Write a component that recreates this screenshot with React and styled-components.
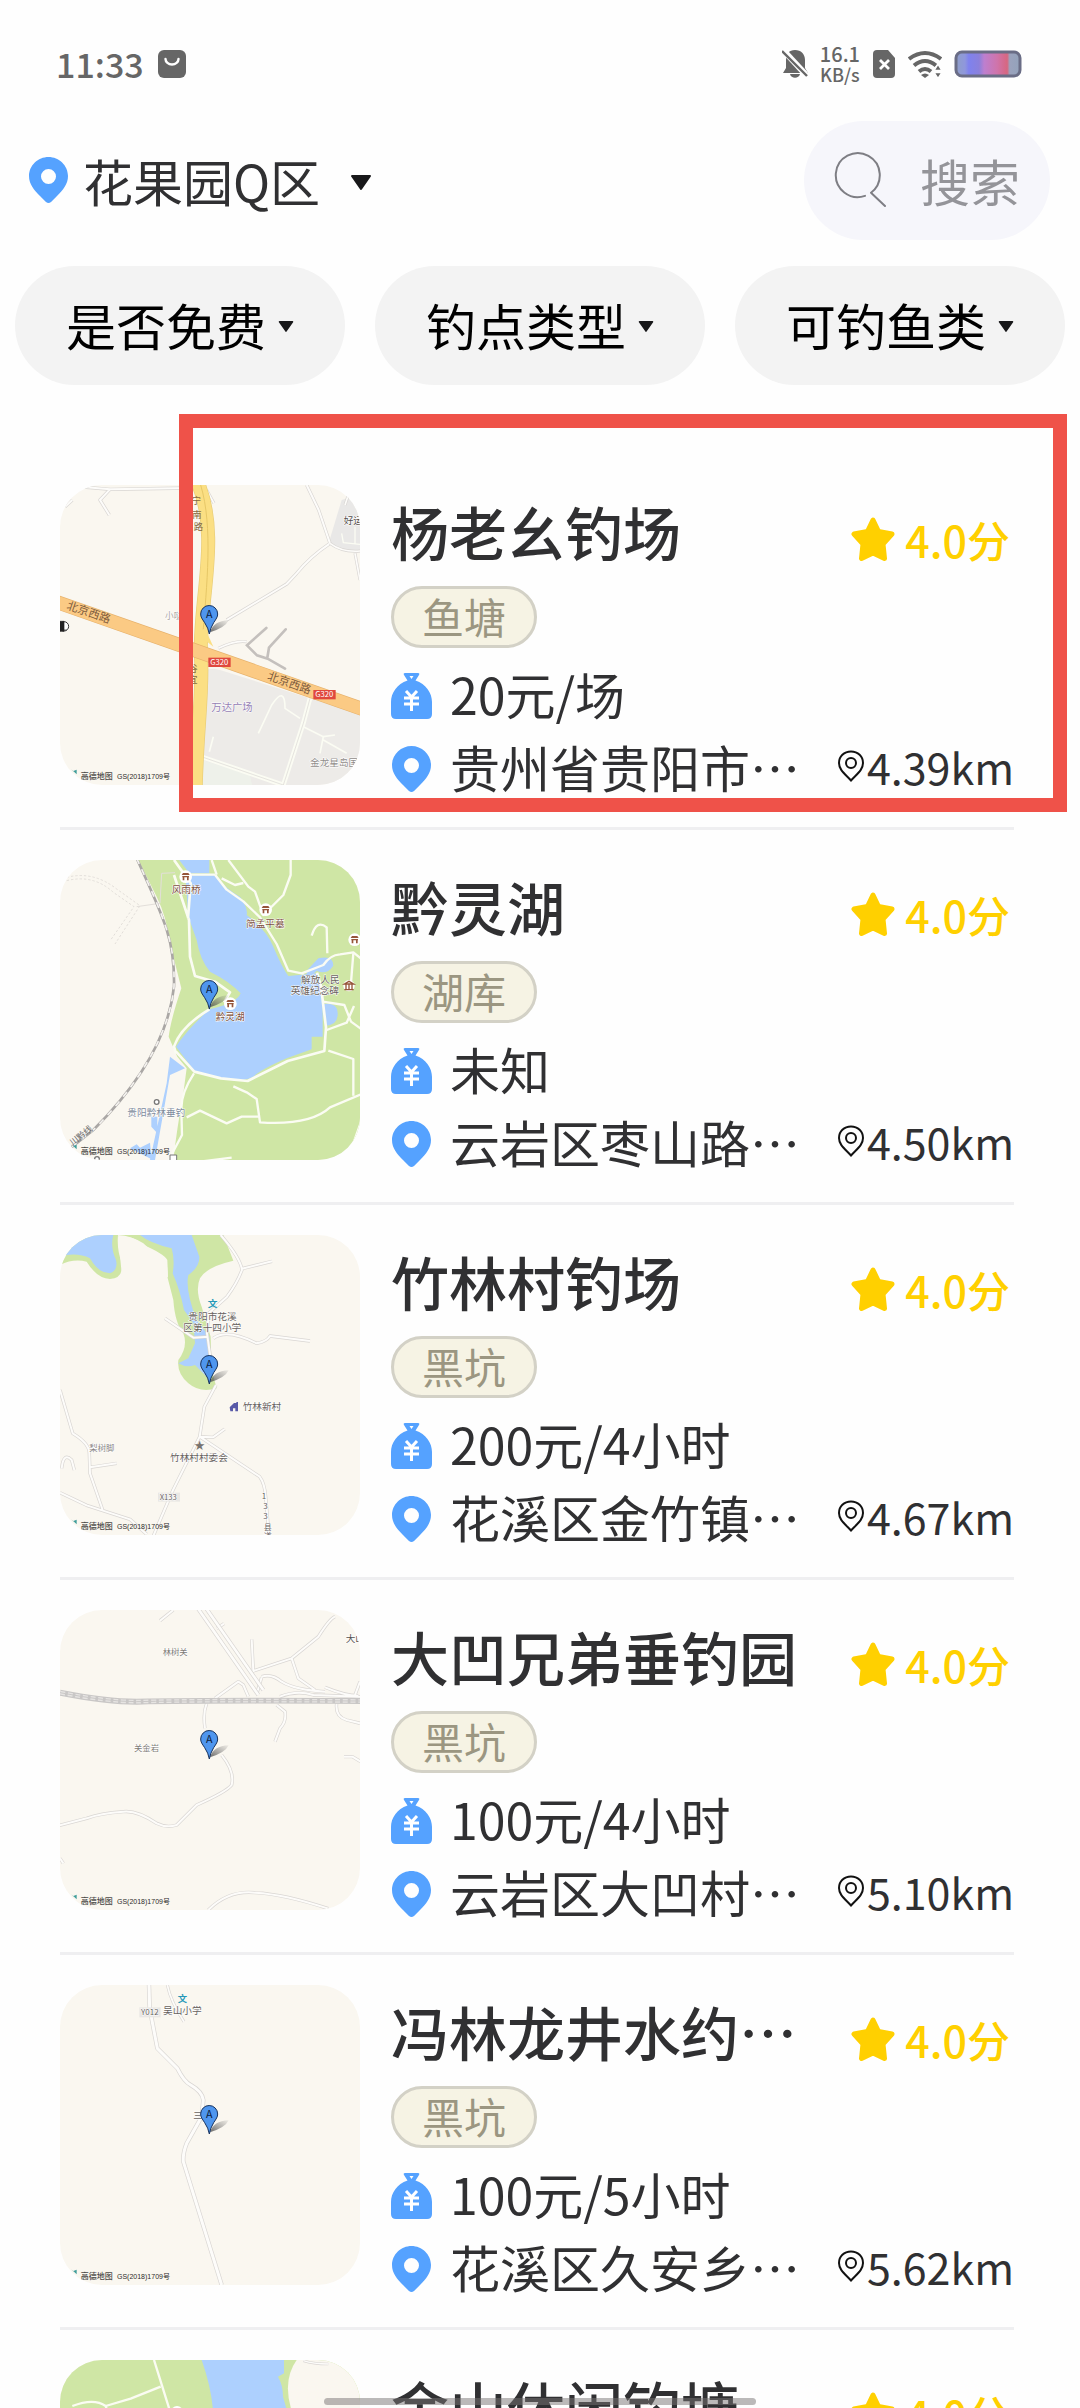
import React from "react";
import styled, { createGlobalStyle } from "styled-components";

const GlobalStyle = createGlobalStyle`
  * {
    box-sizing: border-box;
  }

  body {
    margin: 0;
    background-color: #fefefe;
    color: #303032;
    font-family: "Noto Sans CJK SC", "Noto Sans", sans-serif;
  }

  button,
  input {
    font-family: inherit;
  }
`;

const spots = [
  {
    name: "杨老幺钓场",
    type: "鱼塘",
    price: "20元/场",
    address: "贵州省贵阳市…",
    distance: "4.39km",
    score: "4.0分",
    map: "plaza",
    marked: true,
  },
  {
    name: "黔灵湖",
    type: "湖库",
    price: "未知",
    address: "云岩区枣山路…",
    distance: "4.50km",
    score: "4.0分",
    map: "lake",
  },
  {
    name: "竹林村钓场",
    type: "黑坑",
    price: "200元/4小时",
    address: "花溪区金竹镇…",
    distance: "4.67km",
    score: "4.0分",
    map: "bamboo",
  },
  {
    name: "大凹兄弟垂钓园",
    type: "黑坑",
    price: "100元/4小时",
    address: "云岩区大凹村…",
    distance: "5.10km",
    score: "4.0分",
    map: "railway",
  },
  {
    name: "冯林龙井水约…",
    type: "黑坑",
    price: "100元/5小时",
    address: "花溪区久安乡…",
    distance: "5.62km",
    score: "4.0分",
    map: "village",
  },
  {
    name: "金山休闲钓塘",
    type: "鱼塘",
    price: "未知",
    address: "花溪区",
    distance: "5.80km",
    score: "4.0分",
    map: "park",
  },
];

const filters = ["是否免费", "钓点类型", "可钓鱼类"];

const App = () => {
  return (
    <Screen>
      <GlobalStyle />
      <StatusBar />
      <Header>
        <LocationButton type="button">
          <PinIcon />
          花果园Q区
          <Caret viewBox="0 0 22 16" $width={22}>
            <path d="M2 1h18l-9 13z" />
          </Caret>
        </LocationButton>
        <SearchBox>
          <SearchIcon />
          <SearchInput type="text" placeholder="搜索" aria-label="搜索" />
        </SearchBox>
      </Header>
      <Filters>
        {filters.map((label) => (
          <FilterButton type="button" key={label}>
            {label}
            <Caret viewBox="0 0 22 16" $width={16}>
              <path d="M2 1h18l-9 13z" />
            </Caret>
          </FilterButton>
        ))}
      </Filters>
      <SpotList>
        {spots.map((spot) => (
          <Spot key={spot.name} spot={spot} />
        ))}
      </SpotList>
      <HomeIndicator />
    </Screen>
  );
};

export default App;

const StatusBar = () => (
  <StyledStatusBar>
    <StatusGroup $gap={14}>
      <Time>11:33</Time>
      <svg width="28" height="28" viewBox="0 0 28 28">
        <rect width="28" height="28" rx="6" fill="#666" />
        <path
          d="M7.5 9a6.5 5.5 0 0 0 13 0"
          fill="none"
          stroke="#fff"
          strokeWidth="2.4"
          strokeLinecap="round"
        />
      </svg>
    </StatusGroup>
    <StatusGroup $gap={12}>
      <svg width="26" height="30" viewBox="0 0 26 30">
        <path
          d="M13 1c6 0 10 4 10 10v8l3 5H1l3-5v-8c0-6 3-10 9-10zM8 25h10c-1 5-9 5-10 0z"
          fill="#666"
        />
        <path d="M1 1l25 27" stroke="#fefefe" strokeWidth="6" />
        <path d="M0 2l25 25" stroke="#666" strokeWidth="2.4" />
      </svg>
      <Speed>
        <strong>16.1</strong>
        <span>KB/s</span>
      </Speed>
      <svg width="24" height="28" viewBox="0 0 24 28">
        <path
          d="M5 0h11l7 8v16a4 4 0 0 1-4 4H5a4 4 0 0 1-4-4V4a4 4 0 0 1 4-4z"
          fill="#666"
        />
        <path d="M8 10l9 9M17 10l-9 9" stroke="#fff" strokeWidth="2.8" />
      </svg>
      <svg width="34" height="28" viewBox="0 0 34 28">
        <g fill="none" stroke="#666" strokeWidth="4">
          <path d="M1 9q16-12 32 0" />
          <path d="M6 15.500q11-9 22 0" />
          <path d="M11 21.500q6-5 12 0" />
        </g>
        <path d="M13 25q4-3 8 0l-4 3z" fill="#666" />
        <path
          d="M26 20.500l4-6.500 4 6.500zM26 22.500h8l-4 6z"
          fill="#666"
          stroke="#fefefe"
          strokeWidth="1.500"
        />
      </svg>
      <svg width="68" height="28" viewBox="0 0 68 28">
        <defs>
          <linearGradient id="charge">
            <stop offset="0" stopColor="#8f9fc9" />
            <stop offset="0.14" stopColor="#8f97dc" />
            <stop offset="0.2" stopColor="#7f82ee" />
            <stop offset="0.36" stopColor="#8a80dc" />
            <stop offset="0.44" stopColor="#bd7fcf" />
            <stop offset="0.64" stopColor="#cf74ab" />
            <stop offset="0.8" stopColor="#d76680" />
            <stop offset="0.84" stopColor="#9ba3bd" />
            <stop offset="1" stopColor="#93a2bb" />
          </linearGradient>
        </defs>
        <rect
          x="2"
          y="2"
          width="64"
          height="24"
          rx="6"
          fill="url(#charge)"
          stroke="#6a6d86"
          strokeWidth="3"
        />
      </svg>
    </StatusGroup>
  </StyledStatusBar>
);

const Spot = ({ spot }) => (
  <SpotItem>
    <MapPicture name={spot.map} />
    <Info>
      <TitleRow>
        <Title>{spot.name}</Title>
        <Rating>
          <StarIcon />
          {spot.score}
        </Rating>
      </TitleRow>
      <Tag>{spot.type}</Tag>
      <InfoRow>
        <MoneyIcon />
        <InfoText>{spot.price}</InfoText>
      </InfoRow>
      <InfoRow>
        <PinIcon />
        <InfoText>{spot.address}</InfoText>
        <Distance>
          <OutlinePinIcon />
          {spot.distance}
        </Distance>
      </InfoRow>
    </Info>
    {spot.marked && <Highlight />}
  </SpotItem>
);

/* ---------- icons ---------- */

const PinIcon = () => (
  <svg width="41" height="46" viewBox="0 0 41 46" fill="#55a2ff">
    <path
      fillRule="evenodd"
      d="M20.500 0C31 0 40 8.500 40 19c0 8-5 14-11 20l-6 6q-2.500 2-5 0l-6-6C6 33 1 27 1 19 1 8.500 10 0 20.500 0zm0 12a7.500 7.500 0 1 0 0 15 7.500 7.500 0 0 0 0-15z"
    />
  </svg>
);

const MoneyIcon = () => (
  <svg width="41" height="46" viewBox="0 0 41 46">
    <path
      d="M14 0h13q2 0 1 2l-3.500 5.500C35 11 41 20 41 29v12q0 5-5 5H5q-5 0-5-5V29C0 20 6 11 16.500 7.500L13 2q-1-2 1-2z"
      fill="#55a2ff"
    />
    <path d="M18.500 3h4l-2 3z" fill="#fff" />
    <path
      d="M15 18l5.500 6 5.500-6M13 25h15M13 31h15M20.500 24v14"
      fill="none"
      stroke="#fff"
      strokeWidth="3"
    />
  </svg>
);

const OutlinePinIcon = () => (
  <svg width="28" height="32" viewBox="0 0 28 32" fill="none" stroke="#111" strokeWidth="2">
    <path d="M14 1.500c7 0 12 5 12 11.500 0 7-6 11-12 17.500C8 24 2 20 2 13 2 6.500 7 1.500 14 1.500z" />
    <circle cx="14" cy="13" r="5" />
  </svg>
);

const StarIcon = () => (
  <svg width="44" height="45" viewBox="0 0 44 45">
    <path
      d="M22 3l5.500 11.500L41 17l-9 10 1.500 14.500L22 36l-11.500 5.500L12 27 3 17l13.500-2.500z"
      fill="#ffd000"
      stroke="#ffd000"
      strokeWidth="5"
      strokeLinejoin="round"
    />
  </svg>
);

const SearchIcon = () => (
  <svg width="54" height="58" viewBox="0 0 54 58" fill="none" stroke="#7e7e84" strokeWidth="2">
    <path
      d="M31 44.900A22 22 0 1 1 37 41.700L51 55"
      strokeLinecap="round"
      strokeLinejoin="round"
    />
  </svg>
);

/* ---------- map thumbnails ---------- */

const LAND = "#faf7f0";
const GREEN = "#cfe6a5";
const WATER = "#add0fe";

// a road is a grey line with a lighter one on top
const Road = ({ d, width = 10, edge = "#d9d6d3", fill = "#fdfcfa" }) => (
  <g fill="none" strokeLinejoin="round">
    <path d={d} stroke={edge} strokeWidth={width} />
    <path d={d} stroke={fill} strokeWidth={width - 4} />
  </g>
);

const Path = ({ d, width = 8 }) => (
  <path d={d} fill="none" stroke="#fbfcf3" strokeWidth={width} strokeLinejoin="round" />
);

const Shrine = ({ x, y }) => (
  <g transform={`translate(${x} ${y})`}>
    <circle r="19" fill="#fff" />
    <path
      d="M-12 -5l4-6h16l4 6zM-10 -2h20v4h-20zM-9 2h5v9h-5zM4 2h5v9h-5z"
      fill="#96553a"
    />
  </g>
);

const Shield = ({ x, y, children }) => (
  <g>
    <rect x={x} y={y} width="67" height="28" fill="#e0483e" />
    <text x={x + 33} y={y + 22} fontSize="23" textAnchor="middle" fill="#fff">
      {children}
    </text>
  </g>
);

const Label = styled.text`
  font-size: ${(props) => props.$size || 29}px;
  fill: ${(props) => props.$color || "#67625e"};
  paint-order: stroke;
  stroke: #ffffff;
  stroke-width: 3px;
`;

const maps = {
  plaza: {
    top: 255,
    land: (
      <>
        <Road d="M60 255L210 268L450 264M210 268L180 300L208 345M75 320l22-20" />
        <path d="M480 820q25-20 60-10l430 135v220H465z" fill="#edebe8" />
        <path d="M470 1075l160 50 8 40H462z" fill="#eef1ea" />
        <path d="M905 300l60-20v170h-60l-38-24z" fill="#e9e8e7" />
        <Path d="M905 400l5 28 50 5M945 380v50" width={4} />
        <Road d="M800 255l36 75 34 100q-60 40-100 90l-30 32L560 660" />
        <Road d="M870 430q40 30 100 22M945 460l15 80M935 255l-20 60M500 270l22 40" width={9} />
        <Road d="M535 745q50-25 85-20" width={9} />
        <g fill="none" stroke="#c4c0bd" strokeWidth="8" strokeLinecap="round">
          <path d="M679 684l-58 52 30 30 32 10 52 30M737 688l-50 55-5 30" />
        </g>
        <Path d="M455 1060l275 95M810 895l-20 75-60 185" width={14} />
        <path d="M455 1060l275 95M810 895l-20 75-60 185" stroke="#d9d6d3" fill="none" strokeWidth="2" />
        <Path d="M655 1000l40-85q40-60 40 10l45 30M520 1010l-12 45M790 980l60 30 35-5M850 1010l-10 50M850 1020l70 40" width={5} />
        <Road
          d="M470 240C520 350 505 480 492 600Q480 720 483 770C490 870 470 1000 467 1170"
          width={42}
          edge="#e8cd78"
          fill="#fbdf83"
        />
        <path d="M482 255C520 380 500 560 488 710" fill="none" stroke="#e6c767" strokeWidth="3" />
        <path d="M470 700l25-15 25 55z" fill="#fbdf83" />
        <Road d="M50 606L970 928" width={42} edge="#e6b16b" fill="#fbca84" />
        <g fontSize="34" fill="#7d5a3c">
          <text transform="translate(78 626) rotate(19)">北京西路</text>
          <text transform="translate(680 838) rotate(19)">北京西路</text>
        </g>
        <g fontSize="28" fill="#86693e">
          <text x="455" y="312">宁</text>
          <text x="457" y="353">南</text>
          <text x="461" y="390">路</text>
          <text x="445" y="817">谷</text>
          <text x="445" y="850">宜</text>
        </g>
        <Shield x={505} y={773}>G320</Shield>
        <Shield x={820} y={870}>G320</Shield>
        <Label x="375" y="658" $size={26} $color="#aaa6a2">小哒</Label>
        <Label x="514" y="932" $size={31} $color="#9480b3">万达广场</Label>
        <Label x="810" y="1098" $color="#918d8a">金龙星岛国</Label>
        <Label x="911" y="371" $color="#55504e">好运</Label>
        <circle cx="72" cy="679" r="14" fill="#fff" stroke="#333" strokeWidth="3" />
        <path d="M60 664h12v30H60zM72 690h8" fill="#222" stroke="#222" strokeWidth="2" />
      </>
    ),
  },
  lake: {
    top: 60,
    land: (
      <>
        <path
          d="M295 60L350 170Q380 230 390 310L424 445Q392 540 386 590L412 650L440 685L430 760Q410 870 400 960H970V50z"
          fill={GREEN}
        />
        <path d="M410 50h98v50h-60z" fill={WATER} />
        <path
          d="M436 106H525Q560 150 600 170Q625 205 620 225Q680 270 700 320Q725 380 745 408L830 400L848 470V590H815V628L740 655Q660 690 640 710Q600 730 540 715L465 695L408 620Q440 570 508 508Q590 490 602 460Q570 425 510 395Q480 360 470 300L445 230z"
          fill={WATER}
        />
        <path
          d="M835 355q45-10 45 22-20 30-50 15l-30 30v-30zM850 492q45-5 43 30 0 35-38 35zM390 650l45 35-45 20-45 255h-15l50-230zM334 830h18v50l-18-20z"
          fill={WATER}
        />
        <path d="M270 925l20-12 10 10 30-15 5 50-30-15z" fill={WATER} />
        <Path d="M402 60l50 70 -8 105M402 105l45 135 3 110 15 58 60 17 45 32-18 30M408 640l-6-20q20-60 106-112M408 635l55 60 80 20 80 8 120-60 110-30 5-70-15-125-12-40" />
        <Path d="M525 104l35 45 50 35 50 48 50 80 35 80 40 8 65-25q20-30 50-32l40-6 25 20M450 104h75M515 60l15 44M565 60l60 80 20 15 25 70 60-60 22-60V60M545 115l40 20 25-6" width={7} />
        <Path d="M815 287q15-50 45-25l2 78M848 485l65 10 20 50 35 25M860 570l60-22 22-50M940 340l-8 100M865 632l75 25v110M965 762l-95 40q-60 55-210 45l-10-70-30-20-40-18M655 830l-50 0-45 20-80-38-40 20M462 700q-40 60-38 110l2 75-40 75M965 840l-25 70M480 965l95-12" width={7} />
        <g fill="none" stroke="#e2ded9" strokeWidth="3" strokeDasharray="7 6">
          <path d="M80 112q80-20 150 35l70 50-75 115M80 122q80-20 140 35l62 43-70 100" />
          <path d="M290 200l70-10 5-90 40-2" strokeDasharray="none" />
        </g>
        <g fill="none">
          <path d="M290 55C380 250 405 310 402 440C385 600 280 750 160 870L90 925" stroke="#aaa7a5" strokeWidth="8" />
          <path
            d="M290 55C380 250 405 310 402 440C385 600 280 750 160 870L90 925"
            stroke="#f4f2ef"
            strokeWidth="5"
            strokeDasharray="18 18"
          />
        </g>
        <Shrine x={437} y={110} />
        <Shrine x={677} y={209} />
        <Shrine x={944} y={299} />
        <Shrine x={571} y={491} />
        <g transform="translate(927 437)" fill="none" stroke="#96553a" strokeWidth="4">
          <circle r="17" fill="#fff" stroke="none" />
          <path d="M-14 -5l14-8 14 8zM-9 -3v13M0 -3v13M9 -3v13M-14 12h28" />
        </g>
        <Label x="395" y="160" $color="#7b4f3c">风雨桥</Label>
        <Label x="618" y="260" $color="#7b4f3c">简孟平墓</Label>
        <Label x="527" y="541" $color="#7b4f3c">黔灵湖</Label>
        <Label x="783" y="430">解放人民</Label>
        <Label x="752" y="462">英雄纪念碑</Label>
        <circle cx="350" cy="786" r="7" fill="#fff" stroke="#777" strokeWidth="4" />
        <Label x="262" y="827" $color="#808b9b">贵阳黔林垂钓</Label>
        <text transform="translate(98 918) rotate(-38)" fontSize="26" fill="#666">川黔线</text>
        <circle cx="171" cy="957" r="7" fill="#fff" stroke="#777" strokeWidth="4" />
        <path d="M390 945h20v20h-20z" fill="#fff" stroke="#777" strokeWidth="3" />
      </>
    ),
  },
  bamboo: {
    top: 75,
    land: (
      <>
        <path
          d="M60 165Q100 145 140 155Q170 205 210 207Q250 205 246 160Q230 120 234 75H550L580 152Q500 170 480 205Q465 240 485 290L512 380L515 480L530 535Q480 550 445 520Q410 490 415 450Q445 410 430 370Q405 340 400 270L382 200Q385 160 370 145Q330 120 310 100Q275 75 234 80V60H60z"
          fill={GREEN}
        />
        <path
          d="M60 150L80 135Q120 130 150 145Q175 190 210 190Q235 180 228 150Q210 110 220 75H60zM300 75Q330 100 395 115Q405 150 398 190Q420 240 432 300L460 340L465 400L445 445L415 460Q440 475 465 465L500 500L510 480L508 380L470 330Q435 240 445 195Q480 170 478 140L455 75z"
          fill={WATER}
        />
        <path d="M234 75Q275 75 310 105Q370 130 382 150L384 200L330 250L200 240L246 200z" fill={LAND} />
        <Road d="M542 75q60 70 64 105-15 40-45 80l-55 50-5 60 10 70M606 176l90-22M375 325l85 58 45-3M520 385q40-30 130 15 30-5 40-22l120 15" />
        <Road d="M528 525l-35 65-14 90-80 160-60 140M479 680l40 2 35-25M479 680l120 80 60 40q15 20 18 60l10 115M60 540l38 130q50 30 50 60l2 60 38 110M150 772l80-12M60 848l80 38 130 42 50 45M65 775q5-50 30-25l8 30" />
        <text x="503" y="292" fontSize="29" fontWeight="700" fill="#2597b8">文</text>
        <Label x="445" y="330">贵阳市花溪</Label>
        <Label x="430" y="363">区第十四小学</Label>
        <path d="M569 592l13-13h7v-3h5v28h-8v-9h-7v9h-8z" fill="#595aa8" />
        <Label x="608" y="601">竹林新村</Label>
        <text x="463" y="718" fontSize="32" fill="#77726e">★</text>
        <Label x="390" y="753">竹林村村委会</Label>
        <Label x="148" y="723" $size={25} $color="#8a8683">梨树脚</Label>
        <rect x="354" y="848" width="66" height="27" fill="#e9e7e4" />
        <Label x="359" y="869" $size={23}>X133</Label>
        <Label x="665" y="866" $size={24}>1</Label>
        <Label x="670" y="897" $size={24}>3</Label>
        <Label x="670" y="926" $size={24}>3</Label>
        <Label x="671" y="960" $size={24}>县</Label>
        <Label x="671" y="988" $size={24}>道</Label>
      </>
    ),
  },
  railway: {
    top: 60,
    land: (
      <>
        <Road d="M360 92l40-32M530 115l22-14M885 80q-15 5-50 60l-80 65-115 38-5-95M755 205l20 60 50 35M665 260q30-10 60 15 40 25 130 30M525 325l70-50 15 10 15 35M720 320q50-20 100-5l140 5M945 315l15-40M855 292q60 25 100 25M665 262l-15 50" />
        <Road d="M470 50l185 265M495 50l175 250" width={12} />
        <Road d="M500 340q-12 30-5 75M710 345l25 20q5 30-15 50l-15 40M890 340q-5 40 30 50l40 10M912 500h25l25 15M545 495q40 50 30 90-15 20-105 60l-60 60q-30 10-60-5-60-40-100-35-70 5-110 20l-85 22M60 805l10 15" />
        <Road d="M505 960q60-60 140-52 90 5 220 48" />
        <g fill="none">
          <path d="M60 308Q200 335 290 335Q500 330 960 333" stroke="#c9c7c6" strokeWidth="18" />
          <path d="M60 308Q200 335 290 335Q500 330 960 333" stroke="#e6e4e2" strokeWidth="11" strokeDasharray="15 8" />
          <path d="M60 308Q200 335 290 335Q500 330 960 333" stroke="#c9c7c6" strokeWidth="3" />
        </g>
        <Label x="368" y="194" $size={25} $color="#7d7a76">林树关</Label>
        <Label x="282" y="484" $size={25} $color="#7d7a76">关金岩</Label>
        <Label x="917" y="156" $color="#55504e">大山</Label>
      </>
    ),
  },
  village: {
    top: 43,
    land: (
      <>
        <Road d="M327 43l2 70 23 120 60 60q20 40 40 50 35 20 38 45l-5 50-45 80q-12 30-10 55l115 370" width={13} />
        <Road d="M382 43q10 50 50 110" width={9} />
        <text x="413" y="93" fontSize="28" fontWeight="700" fill="#2597b8">文</text>
        <rect x="298" y="110" width="64" height="30" fill="#e9e7e4" />
        <Label x="303" y="134" $size={24}>Y012</Label>
        <Label x="369" y="130">吴山小学</Label>
        <Label x="460" y="445" $size={27}>三</Label>
      </>
    ),
  },
  park: {
    top: 1170,
    land: (
      <>
        <rect x="50" y="1160" width="930" height="920" fill={GREEN} />
        <path d="M485 1170h247v40l-18 10q15 25 15 60l20 70H520Q520 1270 485 1170z" fill={WATER} />
        <path d="M770 1170h190v180H765Q720 1240 770 1170z" fill={LAND} />
        <Road d="M790 1172q30 10 75 10" width={8} />
        <Path d="M342 1170l50 160M362 1250l-90 36-75 22q-35-25-100 0M197 1308l10 30" width={7} />
        <circle cx="411" cy="1326" r="18" fill="#fff" />
      </>
    ),
  },
};

const MapPicture = ({ name }) => {
  const { top, land } = maps[name];
  return (
    <MapSvg viewBox={`60 ${top} 900 900`}>
      {land}
      <g transform={`translate(60 ${top})`}>
        <defs>
          <linearGradient id={`shade-${name}`} x1="0" y1="1" x2="1" y2="0">
            <stop offset="0" stopColor="#444" stopOpacity="0.8" />
            <stop offset="1" stopColor="#777" stopOpacity="0.1" />
          </linearGradient>
        </defs>
        <path d="M450 442q10-34 56-36-10 22-56 36z" fill={`url(#shade-${name})`} />
        <path
          d="M448 447q-3-18-14-34c-8-12-12-17-12-26a25 25 0 0 1 51 0c0 9-4 14-12 26q-10 16-13 34z"
          fill="#4f96ee"
          stroke="#18335e"
          strokeWidth="3"
        />
        <text x="448" y="399" fontSize="32" textAnchor="middle" fill="#0b1c3a">
          A
        </text>
        <path d="M32 853l8 5 10-4v14l-8-8z" fill="#3f9d9a" />
        <text x="62" y="882" fontSize="24" fontWeight="500" fill="#4b4947">
          高德地图
        </text>
        <MapCode x="171" y="882">GS(2018)1709号</MapCode>
      </g>
    </MapSvg>
  );
};

/* ---------- styles ---------- */

const Screen = styled.div`
  height: 100vh;
  display: flex;
  flex-direction: column;
  overflow: hidden;
`;

const StyledStatusBar = styled.div`
  height: 121px;
  flex: none;
  padding: 7px 58px 0 56px;
  display: flex;
  align-items: center;
  justify-content: space-between;
  color: #666666;
`;

const StatusGroup = styled.div`
  display: flex;
  align-items: center;
  gap: ${(props) => props.$gap}px;
`;

const Time = styled.span`
  font-size: 34px;
  line-height: 40px;
  font-weight: 500;
`;

const Speed = styled.div`
  display: flex;
  flex-direction: column;
  align-items: center;
  font-size: 18px;
  line-height: 20px;
  font-weight: 500;

  strong {
    font-size: 20px;
    font-weight: 500;
  }
`;

const Header = styled.header`
  flex: none;
  padding: 0 30px 0 28px;
  display: flex;
  align-items: center;
  justify-content: space-between;
`;

const LocationButton = styled.button`
  display: flex;
  align-items: center;
  gap: 14px;
  padding: 0 0 2px;
  border: none;
  background: none;
  color: #303032;
  font-size: 50px;
  line-height: 72px;
  cursor: pointer;
`;

const Caret = styled.svg`
  width: ${(props) => props.$width}px;
  margin-top: 6px;
  margin-left: ${(props) => (props.$width > 16 ? 16 : 0)}px;
  fill: #18181a;
  stroke: #18181a;
  stroke-width: 2px;
  stroke-linejoin: round;
`;

const SearchBox = styled.label`
  width: 246px;
  height: 119px;
  padding: 0 30px 2px;
  display: flex;
  align-items: center;
  gap: 32px;
  border-radius: 60px;
  background-color: #f6f6fb;

  svg {
    flex: none;
  }
`;

const SearchInput = styled.input`
  width: 100px;
  flex: none;
  padding: 0;
  border: none;
  outline: none;
  background: transparent;
  font-size: 50px;
  line-height: 72px;

  &::placeholder {
    color: #949499;
    opacity: 1;
  }
`;

const Filters = styled.div`
  flex: none;
  display: grid;
  grid-template-columns: repeat(3, 1fr);
  gap: 30px;
  padding: 26px 15px 0;
`;

const FilterButton = styled.button`
  height: 119px;
  display: flex;
  align-items: center;
  justify-content: center;
  gap: 12px;
  padding: 0 0 4px;
  border: none;
  border-radius: 60px;
  background-color: #f3f3f3;
  color: #000000;
  font-size: 50px;
  line-height: 72px;
  cursor: pointer;
`;

const SpotList = styled.ul`
  flex: 1;
  min-height: 0;
  margin: 0;
  padding: 70px 66px 0 60px;
  list-style: none;
  overflow: hidden auto;
  scrollbar-width: none;
`;

const SpotItem = styled.li`
  position: relative;
  display: flex;
  gap: 31px;
  padding: 30px 0 22px;
  border-bottom: 3px solid #efeff1;
`;

const MapSvg = styled.svg`
  width: 300px;
  height: 300px;
  flex: none;
  border-radius: 42px;
  background-color: ${LAND};
`;

const MapCode = styled.text`
  font-family: "Liberation Sans", "Noto Sans CJK SC", sans-serif;
  font-size: 21px;
  fill: #2b2b2b;
`;

const Info = styled.div`
  flex: 1;
  min-width: 0;
  padding-top: 11px;
`;

const TitleRow = styled.div`
  display: flex;
  align-items: flex-end;
  justify-content: space-between;
  height: 73px;
`;

const Title = styled.h2`
  margin: 0;
  align-self: flex-start;
  font-size: 58px;
  line-height: 70px;
  font-weight: 500;
  white-space: nowrap;
`;

const Rating = styled.span`
  display: flex;
  align-items: center;
  gap: 10px;
  padding-right: 4px;
  color: #ffd000;
  font-size: 43px;
  line-height: 60px;
  font-weight: 500;
`;

const Tag = styled.div`
  width: 146px;
  margin: 17px 0 11px;
  padding-bottom: 2px;
  border: 3px solid #d3d1c6;
  border-radius: 31px;
  background-color: #f6f3e4;
  color: #9b9681;
  font-size: 42px;
  line-height: 54px;
  text-align: center;
`;

const InfoRow = styled.div`
  display: flex;
  align-items: center;
  gap: 18px;
  white-space: nowrap;

  svg {
    flex: none;
  }
`;

const InfoText = styled.span`
  flex: 1;
  padding-bottom: 5px;
  font-size: 50px;
  line-height: 68px;
`;

const Distance = styled.span`
  display: flex;
  align-items: center;
  gap: 2px;
  padding-bottom: 5px;
  font-size: 43px;
  line-height: 68px;
`;

const Highlight = styled.div`
  position: absolute;
  top: -41px;
  right: -53px;
  bottom: 15px;
  left: 119px;
  border: 14px solid #ef5249;
  pointer-events: none;
`;

const HomeIndicator = styled.div`
  position: fixed;
  bottom: 3px;
  left: 50%;
  width: 432px;
  height: 7px;
  margin-left: -216px;
  border-radius: 4px;
  background-color: rgba(120, 115, 115, 0.5);
`;
